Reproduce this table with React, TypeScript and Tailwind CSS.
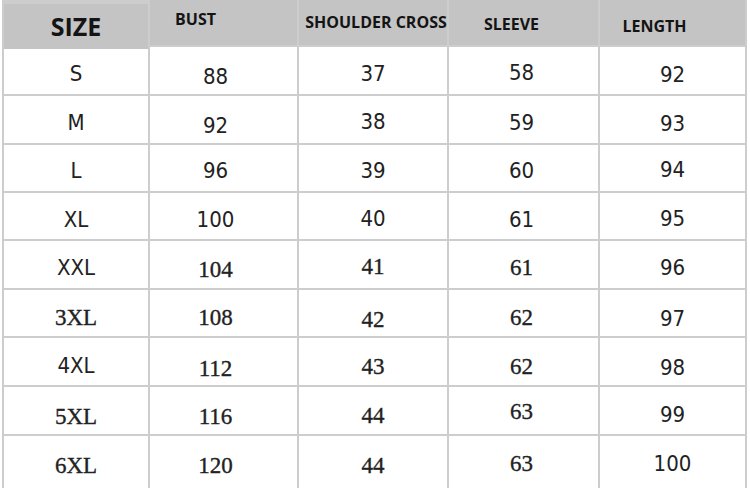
import React from "react";

/**
 * Datas
 */
const sans = "font-['DejaVu_Sans_Condensed','DejaVu_Sans',sans-serif] text-[22px] text-[#222222]";
const serif =
  "font-['Liberation_Serif','DejaVu_Serif',serif] text-[23px] text-[#222222] [-webkit-text-stroke:0.35px_#222222]";

// vertical nudge for each cell, the scan is not quite straight
const nudge: Record<number, string> = {
  [-2]: "-translate-y-[2px]",
  0: "",
  1: "translate-y-[1px]",
  2: "translate-y-[2px]",
  3: "translate-y-[3px]",
  4: "translate-y-[4px]",
  5: "translate-y-[5px]",
  6: "translate-y-[6px]",
  7: "translate-y-[7px]",
  8: "translate-y-[8px]",
};

type Cell = [string, number, "s" | "r"];

const rows: Cell[][] = [
  [["S", 3, "s"], ["88", 6, "s"], ["37", 3, "s"], ["58", 2, "s"], ["92", 4, "s"]],
  [["M", 3, "s"], ["92", 6, "s"], ["38", 2, "s"], ["59", 3, "s"], ["93", 4, "s"]],
  [["L", 2, "s"], ["96", 2, "s"], ["39", 2, "s"], ["60", 2, "s"], ["94", 1, "s"]],
  [["XL", 3, "s"], ["100", 3, "s"], ["40", 2, "s"], ["61", 3, "s"], ["95", 2, "s"]],
  [["XXL", 3, "s"], ["104", 6, "r"], ["41", 3, "r"], ["61", 4, "r"], ["96", 3, "s"]],
  [["3XL", 5, "r"], ["108", 5, "r"], ["42", 7, "r"], ["62", 5, "r"], ["97", 5, "s"]],
  [["4XL", 4, "s"], ["112", 8, "r"], ["43", 6, "r"], ["62", 6, "r"], ["98", 6, "s"]],
  [["5XL", 7, "r"], ["116", 7, "r"], ["44", 6, "r"], ["63", 2, "r"], ["99", 4, "s"]],
  [["6XL", 0, "r"], ["120", 0, "r"], ["44", 0, "r"], ["63", -2, "r"], ["100", -2, "s"]],
];

// the bust column sits a bit left of its cell centre
const colShift = ["", "-translate-x-[8px]", "", "-translate-x-[2px]", ""];

/**
 * Page
 */
export default function App() {
  return (
    <div className="w-[750px] h-[488px] overflow-hidden bg-white pl-[2px]">
      <div className="grid w-[745px] grid-cols-[144px_147px_148px_149px_145px] grid-rows-[45px_47px_47px_46px_46px_47px_46px_47px_47px_60px] gap-[2px] bg-[#cdcdcd] px-[2px] font-['Open_Sans',sans-serif] font-bold text-[#141414]">
        <div className="flex items-center justify-center bg-[#c4c4c4] text-[25px] translate-y-[4px]">
          <span>SIZE</span>
        </div>
        <div className="flex items-center justify-center bg-[#c4c4c4] text-[16px]">
          <span className="-translate-x-[28px] -translate-y-[4px]">BUST</span>
        </div>
        <div className="flex items-center justify-center whitespace-nowrap bg-[#c4c4c4] text-[16px]">
          <span className="translate-x-[3px] -translate-y-[1px]">SHOULDER CROSS</span>
        </div>
        <div className="flex items-center justify-center bg-[#c4c4c4] text-[16px]">
          <span className="-translate-x-[12px] translate-y-[1px]">SLEEVE</span>
        </div>
        <div className="flex items-center justify-center bg-[#c4c4c4] text-[16px]">
          <span className="-translate-x-[18px] translate-y-[3px]">LENGTH</span>
        </div>

        {rows.map((row, i) =>
          row.map(([text, dy, f], j) => (
            <div
              key={i + "-" + j}
              className={
                "flex justify-center bg-white font-normal " +
                (i === rows.length - 1 ? "items-start pt-[13px]" : "items-center")
              }
            >
              <span className={(f === "s" ? sans : serif) + " " + nudge[dy] + " " + colShift[j]}>
                {text}
              </span>
            </div>
          ))
        )}
      </div>
    </div>
  );
}
